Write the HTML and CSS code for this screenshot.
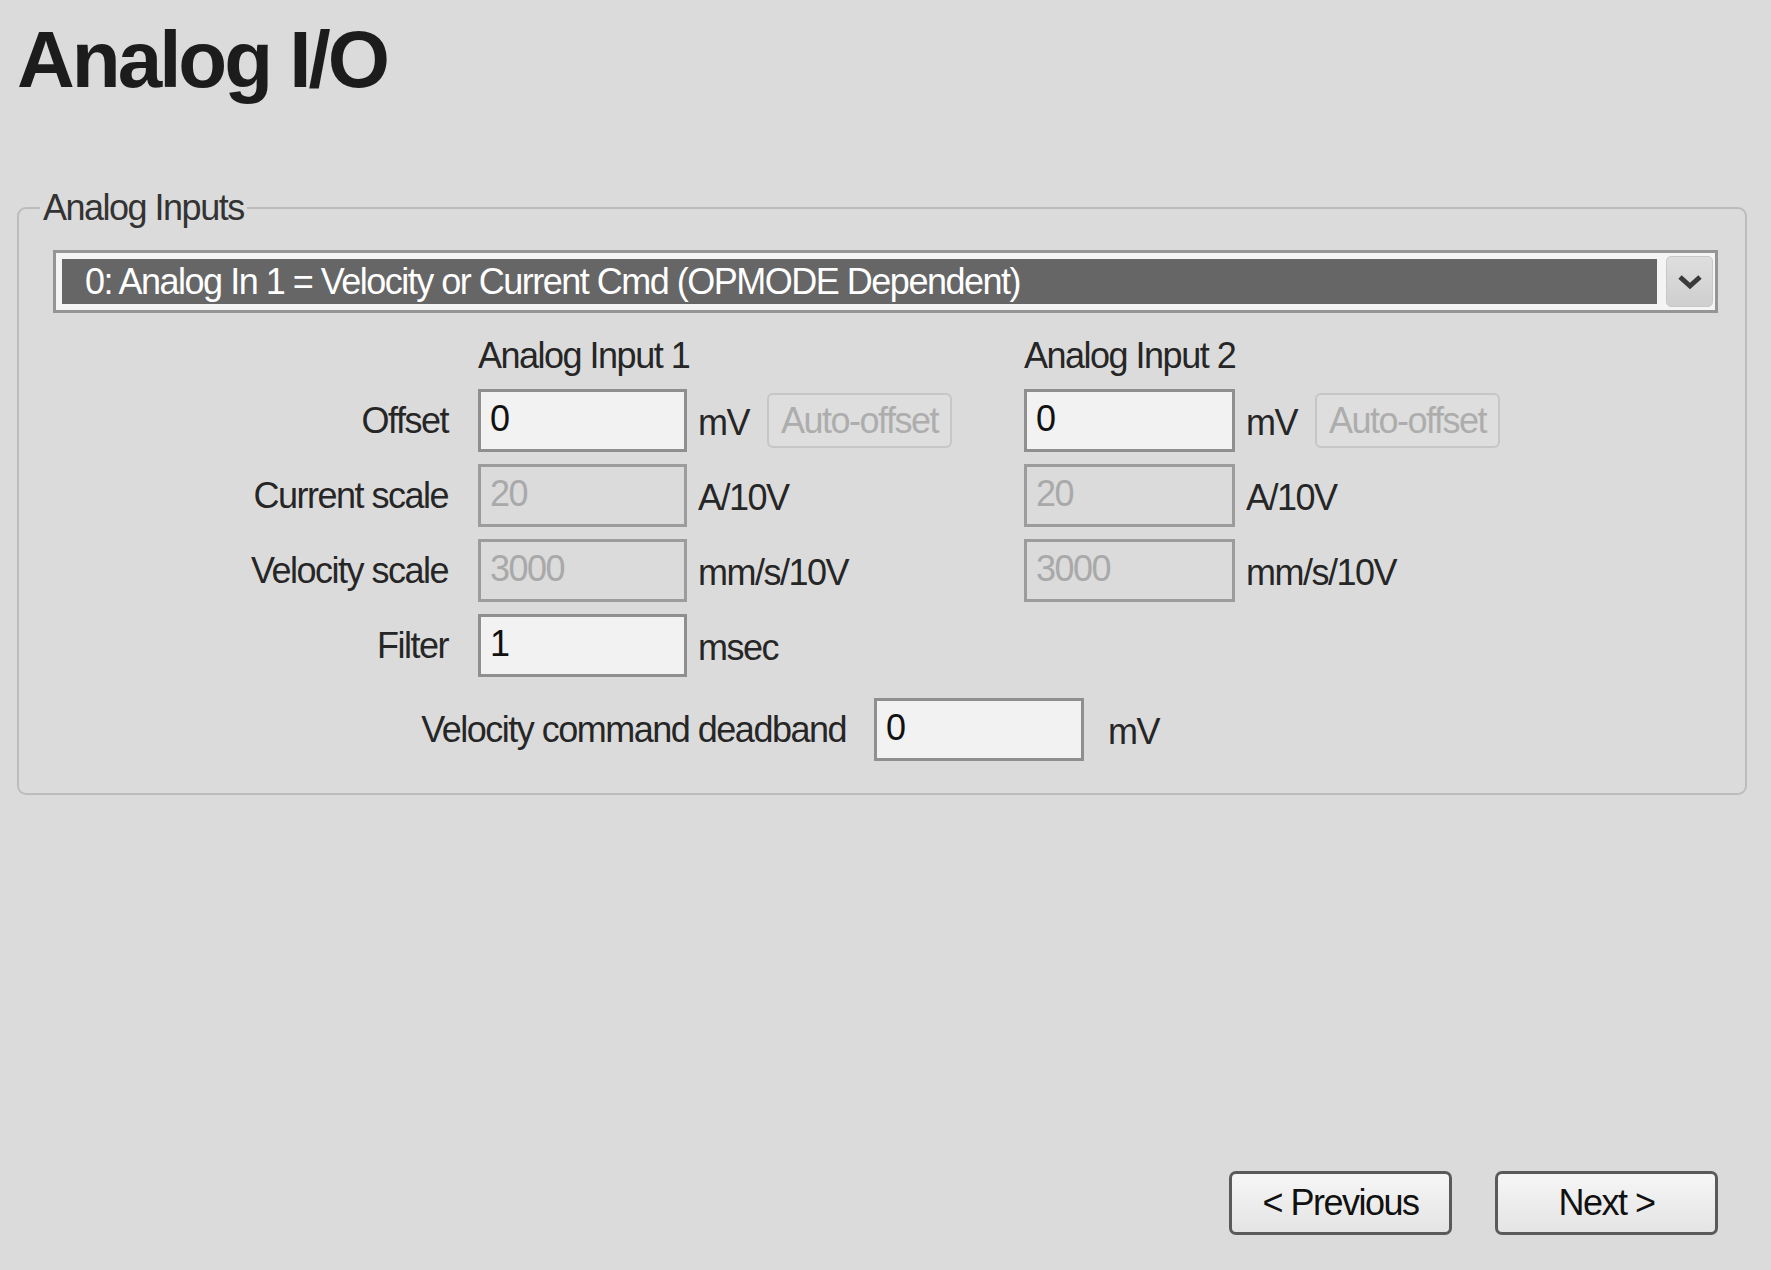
FILE: index.html
```html
<!DOCTYPE html>
<html lang="en">
<head>
<meta charset="UTF-8">
<title>Analog I/O</title>
<link rel="stylesheet" href="styles.css">
</head>
<body>
<div class="page">
    <h1 class="page-title">Analog I/O</h1>

    <fieldset class="group">
        <legend>Analog Inputs</legend>
        <div class="group-body">
            <!-- mode selector -->
            <div class="select">
                <div class="select-value">0: Analog In 1 = Velocity or Current Cmd (OPMODE Dependent)</div>
                <div class="select-btn">
                    <svg width="26" height="16" viewBox="0 0 26 16"><path d="M3 3 L13 12 L23 3" fill="none" stroke="#3a3a3a" stroke-width="5"/></svg>
                </div>
            </div>

            <div class="input-grid">
                <div></div>
                <div class="col-head col-1">Analog Input 1</div>
                <div class="col-head col-2">Analog Input 2</div>

                <label class="row-label">Offset</label>
                <input class="field" value="0">
                <div class="unit"><span class="unit-text">mV</span><button class="btn-auto" disabled>Auto-offset</button></div>
                <input class="field" value="0">
                <div class="unit"><span class="unit-text">mV</span><button class="btn-auto" disabled>Auto-offset</button></div>

                <label class="row-label">Current scale</label>
                <input class="field" value="20" disabled>
                <div class="unit"><span class="unit-text">A/10V</span></div>
                <input class="field" value="20" disabled>
                <div class="unit"><span class="unit-text">A/10V</span></div>

                <label class="row-label">Velocity scale</label>
                <input class="field" value="3000" disabled>
                <div class="unit"><span class="unit-text">mm/s/10V</span></div>
                <input class="field" value="3000" disabled>
                <div class="unit"><span class="unit-text">mm/s/10V</span></div>

                <label class="row-label">Filter</label>
                <input class="field" value="1">
                <div class="unit"><span class="unit-text">msec</span></div>
            </div>

            <div class="deadband">
                <label class="deadband-label">Velocity command deadband</label>
                <input class="field" value="0">
                <span class="unit-text">mV</span>
            </div>
        </div>
    </fieldset>

    <div class="nav-buttons">
        <button class="btn-nav">&lt; Previous</button>
        <button class="btn-nav">Next &gt;</button>
    </div>
</div>
</body>
</html>
```

FILE: styles.css
```css
body {
    margin: 0;
    background: #dbdbdb;
    font-family: "Liberation Sans", Arial, sans-serif;
    font-size: 36px;
    letter-spacing: -1.5px;
    color: #262626;
}
.page {
    min-height: 100vh;
    box-sizing: border-box;
    display: flex;
    flex-direction: column;
    padding: 0 24px 35px 17px;
}
.page-title {
    font-weight: bold;
    font-size: 80px;
    line-height: 80px;
    letter-spacing: -3px;
    margin: 20px 0 84px;
    color: #1c1c1c;
}
.group {
    margin: 0;
    border: 2px solid #bcbcbc;
    border-radius: 9px;
    padding: 0 27px 32px 21px;
}
.group legend {
    padding: 0 3px;
    line-height: 48px;
    color: #333;
}
.group-body {
    margin-left: 13px;
}
.select {
    margin-top: 18px;
    height: 63px;
    box-sizing: border-box;
    display: flex;
    gap: 9px;
    border: 3px solid #959595;
    background: #f4f4f4;
    padding: 3px 2px 3px 6px;
}
.select-value {
    flex: 1;
    margin: 3px 0;
    background: #666;
    color: #fff;
    padding-left: 23px;
    display: flex;
    align-items: center;
    white-space: nowrap;
}
.select-btn {
    width: 47px;
    box-sizing: border-box;
    border: 1px solid #c8c8c8;
    background: linear-gradient(#dedede, #cfcfcf);
    border-radius: 5px;
    display: flex;
    align-items: center;
    justify-content: center;
}
.input-grid {
    display: grid;
    grid-template-columns: 425px 209px 337px 211px auto;
    row-gap: 12px;
    margin-top: 21px;
    align-items: center;
}
.col-head {
    line-height: 43px;
}
.col-1 {
    grid-column: 2 / span 2;
}
.col-2 {
    grid-column: 4 / span 2;
}
.row-label {
    grid-column: 1;
    text-align: right;
    padding-right: 30px;
}
.field {
    font: inherit;
    letter-spacing: inherit;
    width: 100%;
    height: 63px;
    box-sizing: border-box;
    margin: 0;
    border: 3px solid #8f8f8f;
    background: #f2f2f2;
    padding: 0 0 4px 9px;
    color: #111;
    outline: none;
}
.field:disabled {
    background: #dbdbdb;
    color: #a9a9a9;
    border-color: #9c9c9c;
}
.unit {
    display: flex;
    align-items: center;
    padding-left: 11px;
}
.unit-text {
    min-width: 69px;
    padding-top: 4px;
}
.btn-auto {
    font: inherit;
    letter-spacing: inherit;
    white-space: nowrap;
    width: 185px;
    height: 55px;
    padding: 0;
    border: 2px solid #c6c6c6;
    border-radius: 6px;
    background: #dedede;
    color: #adadad;
}
.deadband {
    display: flex;
    align-items: center;
    margin-top: 21px;
}
.deadband-label {
    width: 821px;
    box-sizing: border-box;
    text-align: right;
    padding-right: 28px;
}
.deadband .field {
    width: 210px;
}
.deadband .unit-text {
    padding-left: 24px;
}
.nav-buttons {
    margin-top: auto;
    display: flex;
    justify-content: flex-end;
    gap: 43px;
    padding-right: 29px;
}
.btn-nav {
    font: inherit;
    letter-spacing: inherit;
    color: #111;
    width: 223px;
    height: 64px;
    padding: 0;
    border: 3px solid #5a5a5a;
    border-radius: 7px;
    background: linear-gradient(#f6f6f6, #e4e4e4);
}
```
